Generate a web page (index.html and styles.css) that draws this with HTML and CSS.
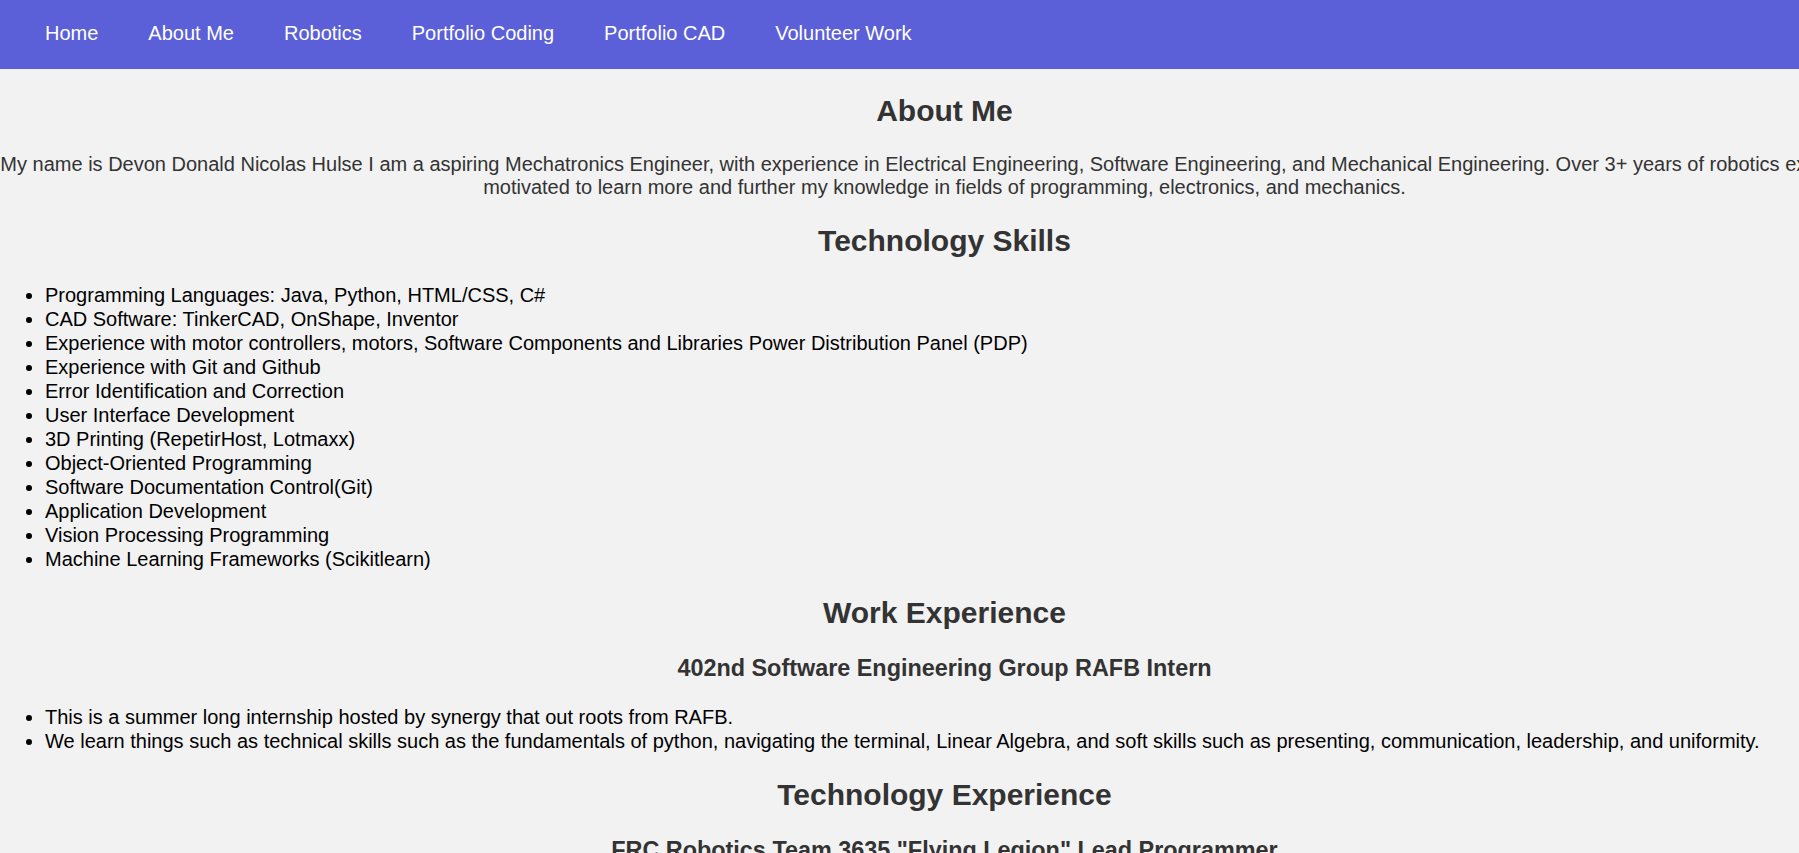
FILE: index.html
```html
<!DOCTYPE html>
<html lang="en">
<head>
<meta charset="utf-8">
<title>About Me</title>
<link rel="stylesheet" href="styles.css">
</head>
<body>
<nav class="topnav">
  <ul class="nav-list">
    <li><a class="nav-link" href="#">Home</a></li>
    <li><a class="nav-link" href="#">About Me</a></li>
    <li><a class="nav-link" href="#">Robotics</a></li>
    <li><a class="nav-link" href="#">Portfolio Coding</a></li>
    <li><a class="nav-link" href="#">Portfolio CAD</a></li>
    <li><a class="nav-link" href="#">Volunteer Work</a></li>
  </ul>
</nav>
<main class="content">
  <h2 class="section-title">About Me</h2>
  <p class="intro">My name is Devon Donald Nicolas Hulse I am a aspiring Mechatronics Engineer, with experience in Electrical Engineering, Software Engineering, and Mechanical Engineering. Over 3+ years of robotics experience, motivated to learn more and further my knowledge in fields of programming, electronics, and mechanics.</p>

  <h2 class="section-title">Technology Skills</h2>
  <ul class="item-list">
    <li>Programming Languages: Java, Python, HTML/CSS, C#</li>
    <li>CAD Software: TinkerCAD, OnShape, Inventor</li>
    <li>Experience with motor controllers, motors, Software Components and Libraries Power Distribution Panel (PDP)</li>
    <li>Experience with Git and Github</li>
    <li>Error Identification and Correction</li>
    <li>User Interface Development</li>
    <li>3D Printing (RepetirHost, Lotmaxx)</li>
    <li>Object-Oriented Programming</li>
    <li>Software Documentation Control(Git)</li>
    <li>Application Development</li>
    <li>Vision Processing Programming</li>
    <li>Machine Learning Frameworks (Scikitlearn)</li>
  </ul>

  <h2 class="section-title">Work Experience</h2>
  <h3 class="sub-title">402nd Software Engineering Group RAFB Intern</h3>
  <ul class="item-list">
    <li>This is a summer long internship hosted by synergy that out roots from RAFB.</li>
    <li>We learn things such as technical skills such as the fundamentals of python, navigating the terminal, Linear Algebra, and soft skills such as presenting, communication, leadership, and uniformity.</li>
  </ul>

  <h2 class="section-title">Technology Experience</h2>
  <h3 class="sub-title">FRC Robotics Team 3635 "Flying Legion" Lead Programmer</h3>
  <ul class="item-list">
    <li>Lead the programming subteam for the robot each season.</li>
  </ul>
</main>
</body>
</html>
```

FILE: styles.css
```css
html, body {
  margin: 0;
  padding: 0;
}

body {
  background: #f2f2f2;
  font-family: "Liberation Sans", Arial, sans-serif;
  font-size: 20px;
  color: #000;
}

.topnav {
  background: #5b5fd8;
  height: 69px;
  display: flex;
  align-items: center;
}

.nav-list {
  list-style: none;
  margin: 0;
  padding: 0 0 2px 20px;
  display: flex;
}

.nav-link {
  display: block;
  padding: 0 25px;
  color: #fff;
  text-decoration: none;
  font-size: 20px;
}

.content {
  width: 105%;
  text-align: center;
}

.section-title {
  font-size: 30px;
  font-weight: bold;
  color: #333;
  margin: 25px 0;
}

.sub-title {
  font-size: 23.4px;
  font-weight: bold;
  color: #333;
  margin: 22px 0 23px;
}

.intro {
  color: #333;
  margin: 20px 0;
  line-height: 23px;
}

.item-list {
  text-align: left;
  margin: 20px 0;
  padding-left: 45px;
}

.item-list li {
  line-height: 24px;
}
```
